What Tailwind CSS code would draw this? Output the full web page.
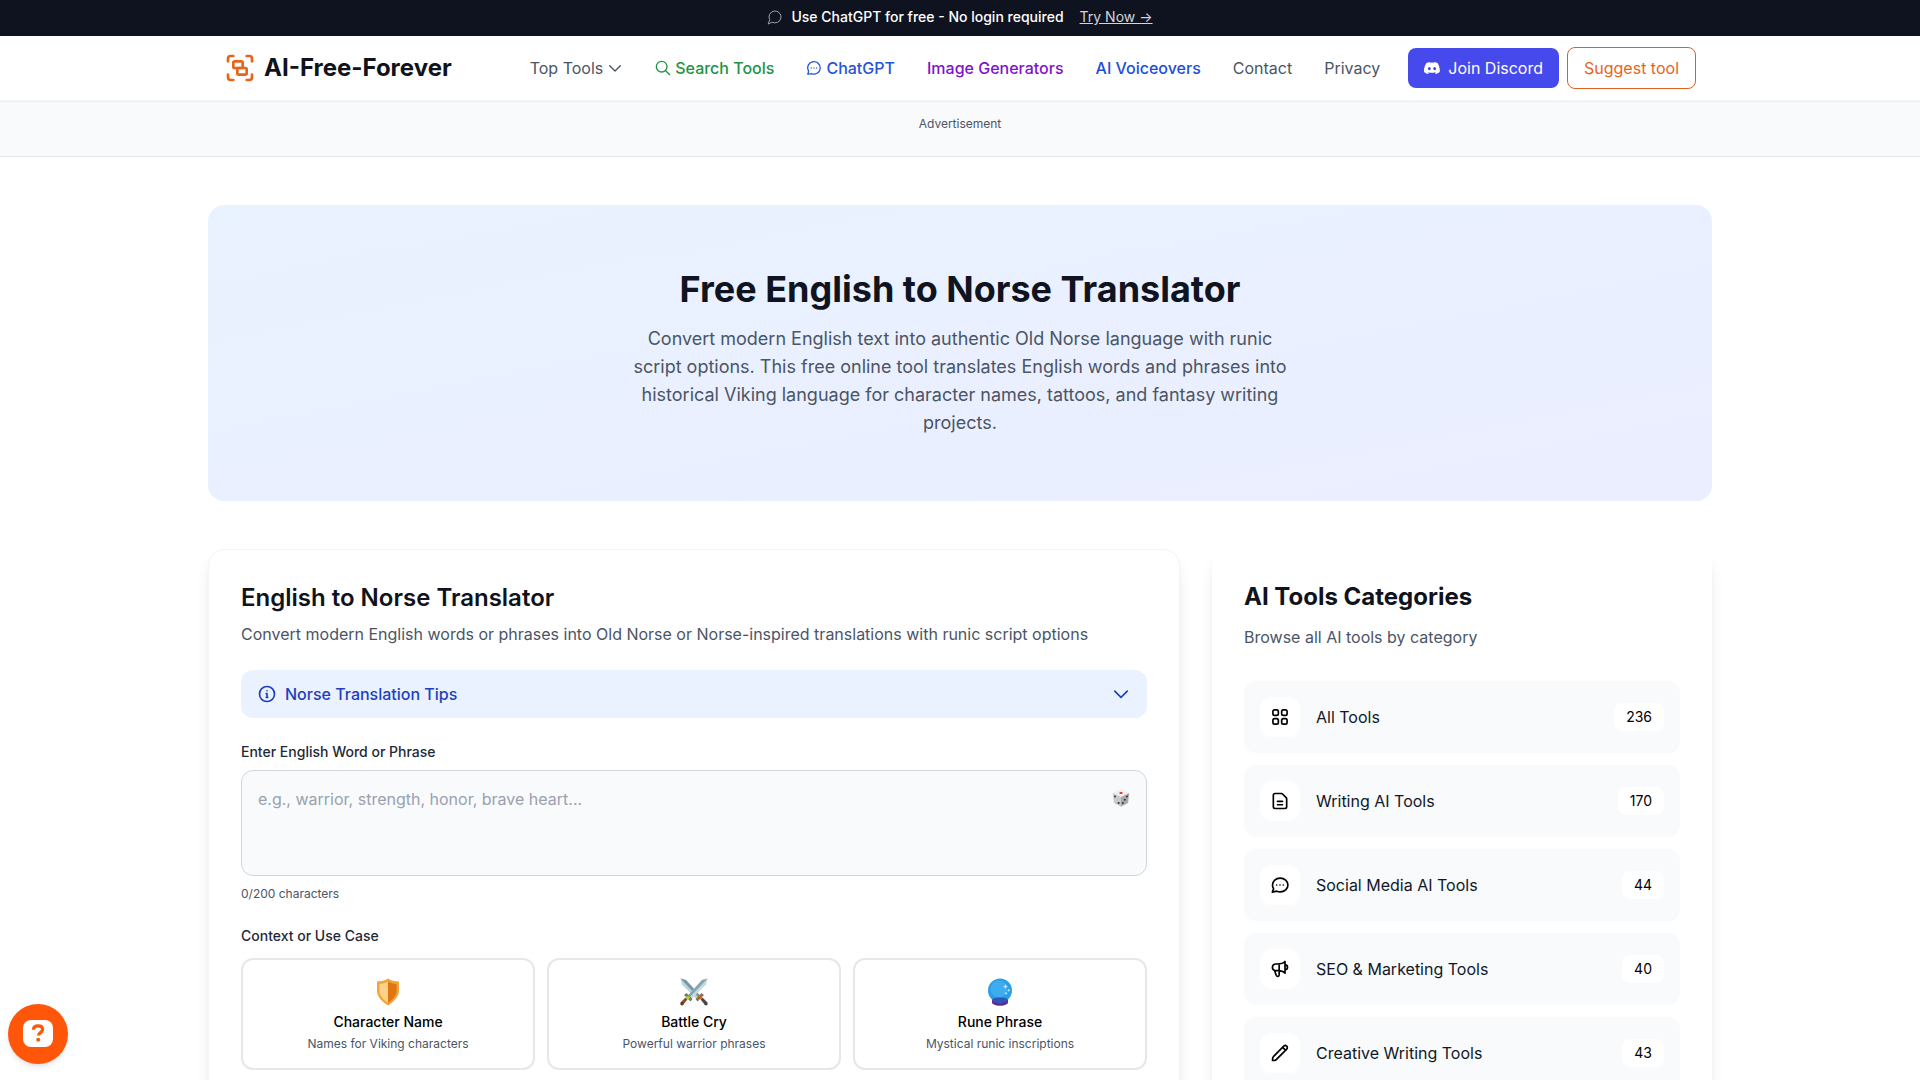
<!DOCTYPE html>
<html lang="en">

<head>
    <meta charset="utf-8">
    <meta name="viewport" content="width=device-width, initial-scale=1">
    <title>Free English to Norse Translator - AI-Free-Forever</title>
    <script src="https://cdn.jsdelivr.net/npm/@tailwindcss/browser@4"></script>
</head>

<body class="h-screen overflow-hidden bg-white font-[Inter,'Liberation_Sans',sans-serif] text-base text-gray-900">

    <!-- Top bar -->
    <div class="flex items-center justify-center bg-[#0f131f] pt-[7px] pb-[9px] text-sm text-white">
        <svg class="mr-2 h-4 w-4 text-gray-400" viewBox="0 0 24 24" fill="none" stroke="currentColor" stroke-width="1.5" stroke-linecap="round" stroke-linejoin="round"><path d="M7.9 20A9 9 0 1 0 4 16.1L2 22Z"/></svg>
        <span class="font-medium">Use ChatGPT for free - No login required</span>
        <a href="#" class="ml-4 text-gray-300 underline">Try Now →</a>
    </div>

    <!-- Header -->
    <header class="relative border-b border-gray-100 bg-white shadow-xs">
        <div class="mx-auto flex h-16 max-w-[1536px] items-center justify-between px-8">
            <a href="#" class="flex items-center gap-2">
                <svg class="h-8 w-8 text-[#e8641b]" viewBox="0 0 24 24" fill="none" stroke="currentColor" stroke-width="2" stroke-linecap="round" stroke-linejoin="round"><path d="M3 7V5c0-1.1.9-2 2-2h2"/><path d="M17 3h2c1.1 0 2 .9 2 2v2"/><path d="M21 17v2c0 1.1-.9 2-2 2h-2"/><path d="M7 21H5c-1.1 0-2-.9-2-2v-2"/><rect width="7" height="5" x="7" y="7" rx="1"/><rect width="7" height="5" x="10" y="12" rx="1"/></svg>
                <span class="text-2xl font-bold text-[#10131c]">AI-Free-Forever</span>
            </a>
            <div class="flex items-center gap-7">
                <nav class="flex items-center gap-8 text-gray-600">
                    <button type="button" class="flex items-center gap-1">Top Tools
                        <svg class="h-4 w-4" viewBox="0 0 24 24" fill="none" stroke="currentColor" stroke-width="2" stroke-linecap="round" stroke-linejoin="round"><path d="m4 8.500 8 8 8-8"/></svg>
                    </button>
                    <a href="#" class="flex items-center gap-1 font-medium text-[#219444]">
                        <svg class="h-4 w-4" viewBox="0 0 24 24" fill="none" stroke="currentColor" stroke-width="2" stroke-linecap="round" stroke-linejoin="round"><circle cx="10" cy="10" r="8"/><path d="m22 22-6-6"/></svg>
                        Search Tools
                    </a>
                    <a href="#" class="flex items-center gap-1 font-medium text-[#2554d4]">
                        <svg class="h-4 w-4" viewBox="0 0 24 24" fill="none" stroke="currentColor" stroke-width="2" stroke-linecap="round" stroke-linejoin="round"><path d="M3.700 16.500A9.500 9.300 0 1 1 8 20.300c-1.500 1-3.500 1.200-5.500.7 1-1 1.500-2.800 1.200-4.500Z"/><path d="M8 12h.01M12 12h.01M16 12h.01"/></svg>
                        ChatGPT
                    </a>
                    <a href="#" class="font-medium text-[#7e12ce]">Image Generators</a>
                    <a href="#" class="font-medium text-[#1d4ed8]">AI Voiceovers</a>
                    <a href="#">Contact</a>
                    <a href="#">Privacy</a>
                </nav>
                <div class="flex items-center gap-2">
                    <a href="#" class="flex items-center gap-2 rounded-lg bg-[#4649ec] px-4 py-2 text-white">
                        <svg class="h-4 w-4" viewBox="0 0 24 24" fill="currentColor"><path d="M20.317 4.370a19.800 19.800 0 0 0-4.885-1.515l-.69 1.280a18.300 18.300 0 0 0-5.484 0l-.69-1.280a19.700 19.700 0 0 0-4.885 1.515C.533 9.046-.32 13.580.1 18.060a19.900 19.900 0 0 0 5.993 3.030l1.226-1.990-1.872-.9.372-.29c3.928 1.793 8.180 1.793 12.062 0l.373.29-1.873.9 1.226 1.990a19.800 19.800 0 0 0 6.002-3.030c.5-5.177-.838-9.674-3.292-13.690ZM8.020 15.330c-1.183 0-2.157-1.085-2.157-2.419s.956-2.419 2.157-2.419c1.210 0 2.176 1.096 2.157 2.420 0 1.333-.956 2.418-2.157 2.418Zm7.975 0c-1.183 0-2.157-1.085-2.157-2.419s.955-2.419 2.157-2.419c1.210 0 2.176 1.096 2.157 2.420 0 1.333-.946 2.418-2.157 2.418Z"/></svg>
                        Join Discord
                    </a>
                    <a href="#" class="rounded-lg border border-[#dc5e22] px-4 py-2 text-[#e8641b]">Suggest tool</a>
                </div>
            </div>
        </div>
    </header>

    <!-- Ad slot -->
    <div class="-mt-px border-b border-gray-200 bg-[#f8fafc] pt-4 pb-6 text-center text-xs text-gray-600">Advertisement</div>

    <main class="mx-auto max-w-[1536px] px-4 pt-12">
        <!-- Hero -->
        <section class="rounded-2xl bg-linear-to-br from-[#e9f2ff] to-[#ebeeff] py-16 text-center">
            <h1 class="text-4xl font-bold text-[#0f1420]">Free English to Norse Translator</h1>
            <p class="mx-auto mt-4 max-w-2xl text-lg text-gray-600">Convert modern English text into authentic Old Norse language with runic script options. This free online tool translates English words and phrases into historical Viking language for character names, tattoos, and fantasy writing projects.</p>
        </section>

        <div class="mt-12 grid grid-cols-[1fr_500px] gap-8">
            <!-- Translator -->
            <section class="rounded-2xl border border-gray-100 bg-white p-8 shadow-lg">
                <h2 class="text-2xl font-semibold text-[#10131c]">English to Norse Translator</h2>
                <p class="mt-2 text-gray-600">Convert modern English words or phrases into Old Norse or Norse-inspired translations with runic script options</p>

                <button type="button" class="mt-6 flex w-full items-center gap-2 rounded-xl bg-[#eaf2ff] px-4 py-3 font-medium text-[#1e3fbf]">
                    <svg class="h-5 w-5" viewBox="0 0 24 24" fill="none" stroke="currentColor" stroke-width="2" stroke-linecap="round" stroke-linejoin="round"><circle cx="12" cy="12" r="9"/><path d="M11 11.500h1V16M11 16h2M12 8.200h.01"/></svg>
                    Norse Translation Tips
                    <svg class="ml-auto h-5 w-5" viewBox="0 0 24 24" fill="none" stroke="currentColor" stroke-width="2" stroke-linecap="round" stroke-linejoin="round"><path d="m4.500 8.500 7.500 7.500 7.500-7.500"/></svg>
                </button>

                <label for="phrase" class="mt-6 block text-sm font-medium text-gray-800">Enter English Word or Phrase</label>
                <div class="relative mt-2">
                    <textarea id="phrase" rows="3" maxlength="200" placeholder="e.g., warrior, strength, honor, brave heart..." class="block w-full resize-none rounded-xl border border-gray-300 bg-[#f8fafc] p-4 placeholder:text-gray-400"></textarea>
                    <button type="button" aria-label="Random phrase" class="absolute top-[18px] right-4">
                        <svg class="h-5 w-5" viewBox="-1 -1 20 20"><path d="M9 .2 17.300 4 9 8 .7 4Z" fill="#efefed"/><path d="M.7 4 9 8v9.800L2 13.900Z" fill="#c9cac8"/><path d="M17.300 4 9 8v9.800l7-3.900Z" fill="#a9aaa8"/><ellipse cx="9" cy="4" rx="1.700" ry="1" fill="#d93025"/><g fill="#333"><circle cx="3" cy="7.500" r="1"/><circle cx="6.600" cy="14" r="1.100"/><circle cx="15" cy="7.500" r="1"/><circle cx="12.800" cy="10.800" r="1"/><circle cx="10.800" cy="14" r="1"/></g></svg>
                    </button>
                </div>
                <p class="mt-2.5 text-xs text-gray-600">0/200 characters</p>

                <h3 class="mt-6 text-sm font-medium text-gray-800">Context or Use Case</h3>
                <div class="mt-3 grid grid-cols-3 gap-3">
                    <button type="button" class="rounded-xl border-2 border-gray-200 p-4 text-center">
                        <svg class="mx-auto h-8 w-8" viewBox="0 0 32 32"><path d="M16 2.500c3 2.200 7 3 11 3v9c0 6-4.500 11-11 15-6.500-4-11-9-11-15v-9c4 0 8-.8 11-3Z" fill="#f2a33c"/><path d="M16 5.500c-2.500 1.600-5.500 2.300-8.600 2.500v6.500c0 4.800 3.400 9 8.600 12.500Z" fill="#ffd28a"/><path d="M16 5.500c2.500 1.600 5.500 2.300 8.600 2.500v6.500c0 4.800-3.400 9-8.600 12.500Z" fill="#df7612"/></svg>
                        <span class="mt-1 block text-sm font-medium text-black">Character Name</span>
                        <span class="mt-1 block text-xs text-gray-600">Names for Viking characters</span>
                    </button>
                    <button type="button" class="rounded-xl border-2 border-gray-200 p-4 text-center">
                        <svg class="mx-auto h-8 w-8" viewBox="0 0 32 32"><g><path d="M2.500 2.500 8 4l14 15.500-3.500 3.500L4 8.500Z" fill="#b9d3d9"/><path d="M8 4 22 19.500 20.300 21.200 2.500 2.500Z" fill="#7597a3"/><path d="m22.500 23.500 2-2 5 5-2.500 2.500Z" fill="#544741"/><path d="m17.500 23 6-6 2.500 2-6.500 6.500Z" fill="#7b7d4a"/><circle cx="22" cy="21.500" r="1.800" fill="#e0552c"/><circle cx="28" cy="27.800" r="1.700" fill="#4b4340"/></g><g transform="matrix(-1 0 0 1 32 0)"><path d="M2.500 2.500 8 4l14 15.500-3.500 3.500L4 8.500Z" fill="#c4dade"/><path d="M8 4 22 19.500 20.300 21.200 2.500 2.500Z" fill="#84a5b0"/><path d="m22.500 23.500 2-2 5 5-2.500 2.500Z" fill="#8a4a26"/><path d="m17.500 23 6-6 2.500 2-6.500 6.500Z" fill="#6d8060"/><circle cx="22" cy="21.500" r="1.800" fill="#b4c832"/><circle cx="28" cy="27.800" r="1.700" fill="#5f3a24"/></g></svg>
                        <span class="mt-1 block text-sm font-medium text-black">Battle Cry</span>
                        <span class="mt-1 block text-xs text-gray-600">Powerful warrior phrases</span>
                    </button>
                    <button type="button" class="rounded-xl border-2 border-gray-200 p-4 text-center">
                        <svg class="mx-auto h-8 w-8" viewBox="0 0 32 32"><path d="M8 23h16v3.500c0 1.800-3.600 3.200-8 3.200s-8-1.400-8-3.200Z" fill="#5a2ca0"/><circle cx="16" cy="14.500" r="12" fill="#2a9fe8"/><circle cx="15" cy="13" r="8.500" fill="#4fb6f3" opacity=".6"/><path d="M8.200 23.400c2-2.600 13.600-2.600 15.600 0-2 2-4.500 3.100-7.800 3.100s-5.800-1.100-7.800-3.100Z" fill="#2b58b5"/><path d="m21.500 8 .7 1.800 1.800.7-1.800.7-.7 1.800-.7-1.800-1.800-.7 1.800-.7ZM24.800 12.500l.5 1.200 1.200.5-1.200.5-.5 1.200-.5-1.200-1.200-.5 1.200-.5ZM22 15.500l.5 1.300 1.300.5-1.300.5-.5 1.300-.5-1.300-1.300-.5 1.300-.5Z" fill="#c9edff"/></svg>
                        <span class="mt-1 block text-sm font-medium text-black">Rune Phrase</span>
                        <span class="mt-1 block text-xs text-gray-600">Mystical runic inscriptions</span>
                    </button>
                </div>
            </section>

            <!-- Categories -->
            <aside class="rounded-2xl bg-white p-8 shadow-lg">
                <h2 class="text-2xl font-bold text-[#10131c]">AI Tools Categories</h2>
                <p class="mt-3 text-gray-600">Browse all AI tools by category</p>
                <ul class="mt-8 space-y-3">
                    <li>
                        <a href="#" class="flex items-center gap-4 rounded-xl bg-[#f8fafb] p-4">
                            <span class="flex h-10 w-10 items-center justify-center rounded-xl bg-white text-black">
                                <svg class="h-5 w-5" viewBox="0 0 24 24" fill="none" stroke="currentColor" stroke-width="2"><rect x="3.500" y="3.500" width="6.500" height="6.500" rx="2"/><rect x="14" y="3.500" width="6.500" height="6.500" rx="2"/><rect x="3.500" y="14" width="6.500" height="6.500" rx="2"/><rect x="14" y="14" width="6.500" height="6.500" rx="2"/></svg>
                            </span>
                            All Tools
                            <span class="ml-auto rounded-lg bg-white px-3 py-1 text-sm text-black">236</span>
                        </a>
                    </li>
                    <li>
                        <a href="#" class="flex items-center gap-4 rounded-xl bg-[#f8fafb] p-4">
                            <span class="flex h-10 w-10 items-center justify-center rounded-xl bg-white text-black">
                                <svg class="h-5 w-5" viewBox="0 0 24 24" fill="none" stroke="currentColor" stroke-width="2" stroke-linecap="round" stroke-linejoin="round"><path d="M13.600 3H6a2 2 0 0 0-2 2v14a2 2 0 0 0 2 2h12a2 2 0 0 0 2-2V9.400a2 2 0 0 0-.6-1.400L15 3.600a2 2 0 0 0-1.400-.6ZM9 12.500h6M9 16.500h6"/></svg>
                            </span>
                            Writing AI Tools
                            <span class="ml-auto rounded-lg bg-white px-3 py-1 text-sm text-black">170</span>
                        </a>
                    </li>
                    <li>
                        <a href="#" class="flex items-center gap-4 rounded-xl bg-[#f8fafb] p-4">
                            <span class="flex h-10 w-10 items-center justify-center rounded-xl bg-white text-black">
                                <svg class="h-5 w-5" viewBox="0 0 24 24" fill="none" stroke="currentColor" stroke-width="2" stroke-linecap="round" stroke-linejoin="round"><path d="M21.500 12c0 4.700-4 8.300-9.200 8.300a10 10 0 0 1-4.300-.9L2.800 20.500l1.500-4A7.500 7.500 0 0 1 3 12c0-4.700 4-8.300 9.200-8.300s9.300 3.600 9.300 8.300Z"/><path d="M8 12h.01M12 12h.01M16 12h.01"/></svg>
                            </span>
                            Social Media AI Tools
                            <span class="ml-auto rounded-lg bg-white px-3 py-1 text-sm text-black">44</span>
                        </a>
                    </li>
                    <li>
                        <a href="#" class="flex items-center gap-4 rounded-xl bg-[#f8fafb] p-4">
                            <span class="flex h-10 w-10 items-center justify-center rounded-xl bg-white text-black">
                                <svg class="h-5 w-5" viewBox="0 0 24 24" fill="none" stroke="currentColor" stroke-width="2" stroke-linecap="round" stroke-linejoin="round"><path d="M11 5.900v13.300a1.800 1.800 0 0 1-3.400.6l-2.200-6.100M18 13a3 3 0 1 0 0-6M5.400 13.700A4 4 0 0 1 7 6h1.800c4.100 0 7.600-1.200 9.200-3v14c-1.600-1.800-5.100-3-9.200-3H7a4 4 0 0 1-1.600-.3Z"/></svg>
                            </span>
                            SEO &amp; Marketing Tools
                            <span class="ml-auto rounded-lg bg-white px-3 py-1 text-sm text-black">40</span>
                        </a>
                    </li>
                    <li>
                        <a href="#" class="flex items-center gap-4 rounded-xl bg-[#f8fafb] p-4">
                            <span class="flex h-10 w-10 items-center justify-center rounded-xl bg-white text-black">
                                <svg class="h-5 w-5" viewBox="0 0 24 24" fill="none" stroke="currentColor" stroke-width="2" stroke-linecap="round" stroke-linejoin="round"><path d="m15.200 5.200 3.600 3.600m-2.300-5a2.500 2.500 0 0 1 3.600 3.500L7.500 20a3 3 0 0 1-1.800.9L3 21l.2-2.700a3 3 0 0 1 .9-1.900L16.500 3.800Z"/></svg>
                            </span>
                            Creative Writing Tools
                            <span class="ml-auto rounded-lg bg-white px-3 py-1 text-sm text-black">43</span>
                        </a>
                    </li>
                </ul>
            </aside>
        </div>
    </main>

    <!-- Help button -->
    <button type="button" aria-label="Help" class="fixed bottom-4 left-2 flex h-[60px] w-[60px] items-center justify-center rounded-full bg-[#ff560a] shadow-md">
        <svg class="h-[30px] w-[30px]" viewBox="0 0 30 30" fill="none"><rect x="0" y="1" width="30" height="27" rx="8" fill="#fff"/><path d="M10.500 10.800c0-2.400 1.900-3.900 4.600-3.900s4.500 1.500 4.500 3.700c0 3-4.200 3-4.200 6" stroke="#ff560a" stroke-width="3.200"/><circle cx="15.200" cy="20.800" r="2" fill="#ff560a"/></svg>
    </button>

</body>

</html>
